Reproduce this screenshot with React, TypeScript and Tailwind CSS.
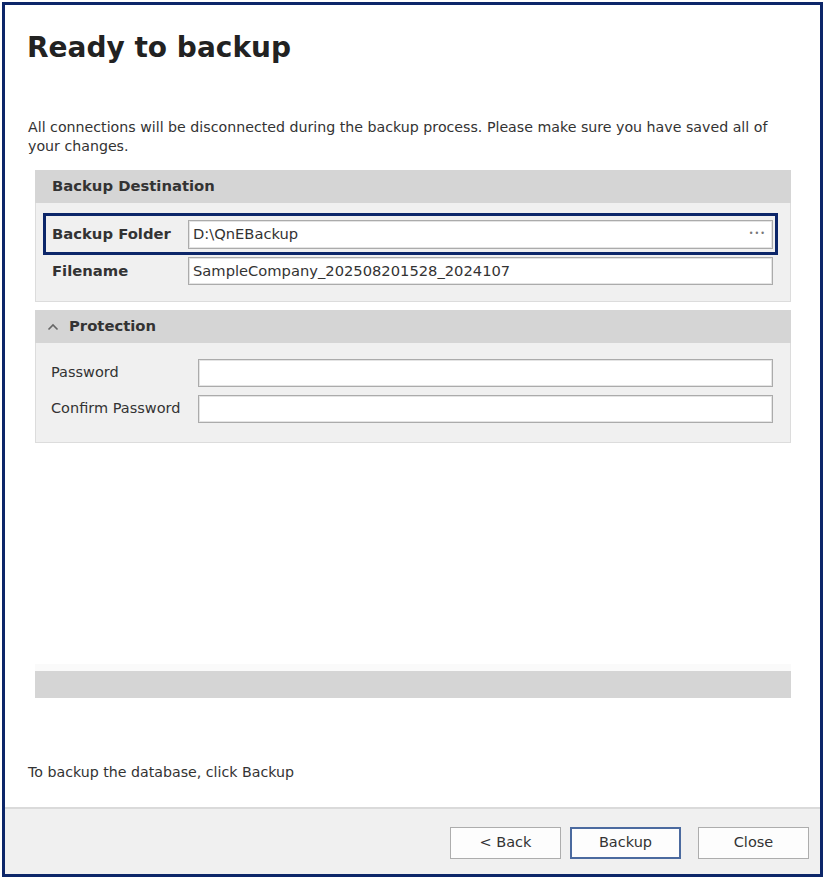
import React from "react";

const font = "font-['DejaVu_Sans',Verdana,sans-serif]";

const GroupHeader = ({ title, chevron }: { title: string; chevron?: boolean }) => (
  <div className="h-[33px] bg-[#d5d5d5] flex items-center pl-[17px] text-[14.8px] font-bold text-[#333]">
    {chevron && (
      <svg width="12" height="8" viewBox="0 0 12 8" className="ml-[-5px] mr-[10px]">
        <path d="M1.5 6.5 L6 2 L10.5 6.5" fill="none" stroke="#666" strokeWidth="1.6" />
      </svg>
    )}
    {title}
  </div>
);

const Input = ({ value, dots, className }: { value?: string; dots?: boolean; className: string }) => (
  <div
    className={`bg-white border border-[#ababab] shadow-[inset_0_0_0_1px_#e4e4e4] flex items-center px-[4px] text-[14.7px] text-[#333] ${className}`}
  >
    <span className="flex-1">{value}</span>
    {dots && <span className="text-[8px] tracking-[1px] text-[#777] pr-[2px]">•••</span>}
  </div>
);

const Button = ({ label, primary, className }: { label: string; primary?: boolean; className?: string }) => (
  <button
    className={`w-[111px] h-[32px] bg-[#fdfdfd] text-[14.5px] text-[#333] ${
      primary ? "border-2 border-[#4b6a9f]" : "border border-[#adadad]"
    } ${className ?? ""}`}
  >
    {label}
  </button>
);

export default function App() {
  return (
    <div className={`w-[825px] h-[880px] bg-white pt-[2px] pl-[2px] ${font}`}>
      <div className="w-[821px] h-[875px] border-[3px] border-[#0c2669] flex flex-col">
        <div className="flex-1 flex flex-col">
          <h1 className="mt-[27px] ml-[22px] text-[28px] leading-[32px] font-bold text-[#222]">Ready to backup</h1>

          <p className="mt-[54px] ml-[23px] text-[14.2px] leading-[19px] text-[#333]">
            All connections will be disconnected during the backup process. Please make sure you have saved all of
            <br />
            your changes.
          </p>

          <div className="mt-[14px] ml-[30px] w-[756px]">
            <GroupHeader title="Backup Destination" />
            <div className="bg-[#f0f0f0] border border-t-0 border-[#dcdcdc] h-[99px] pt-[10px]">
              <div className="ml-[7px] w-[735px] h-[42px] border-[3px] border-[#0c2669] flex items-center">
                <span className="w-[142px] pl-[6px] text-[14.8px] font-bold text-[#333]">Backup Folder</span>
                <Input value="D:\QnEBackup" dots className="w-[585px] h-[29px]" />
              </div>
              <div className="mt-[2px] flex items-center h-[28px]">
                <span className="w-[152px] pl-[16px] text-[14.8px] font-bold text-[#333]">Filename</span>
                <Input value="SampleCompany_202508201528_2024107" className="w-[585px] h-[28px]" />
              </div>
            </div>
          </div>

          <div className="mt-[8px] ml-[30px] w-[756px]">
            <GroupHeader title="Protection" chevron />
            <div className="bg-[#f0f0f0] border border-t-0 border-[#dcdcdc] h-[100px] pt-[16px]">
              <div className="flex items-center h-[28px]">
                <span className="w-[162px] pl-[15px] text-[14.5px] text-[#333]">Password</span>
                <Input className="w-[575px] h-[28px]" />
              </div>
              <div className="mt-[8px] flex items-center h-[28px]">
                <span className="w-[162px] pl-[15px] text-[14.5px] text-[#333]">Confirm Password</span>
                <Input className="w-[575px] h-[28px]" />
              </div>
            </div>
          </div>

          <div className="mt-[221px] ml-[30px] w-[756px] h-[7px] bg-[#fafafa]" />
          <div className="ml-[30px] w-[756px] h-[27px] bg-[#d5d5d5]" />

          <p className="mt-[65px] ml-[23px] text-[14.2px] leading-[19px] text-[#333]">To backup the database, click Backup</p>
        </div>

        <div className="h-[67px] bg-[#f0f0f0] border-t-2 border-[#dadada] flex items-center justify-end pr-[11px] pt-[2px]">
          <Button label="< Back" className="w-[110px]" />
          <Button label="Backup" primary className="ml-[9px]" />
          <Button label="Close" className="ml-[17px]" />
        </div>
      </div>
    </div>
  );
}
